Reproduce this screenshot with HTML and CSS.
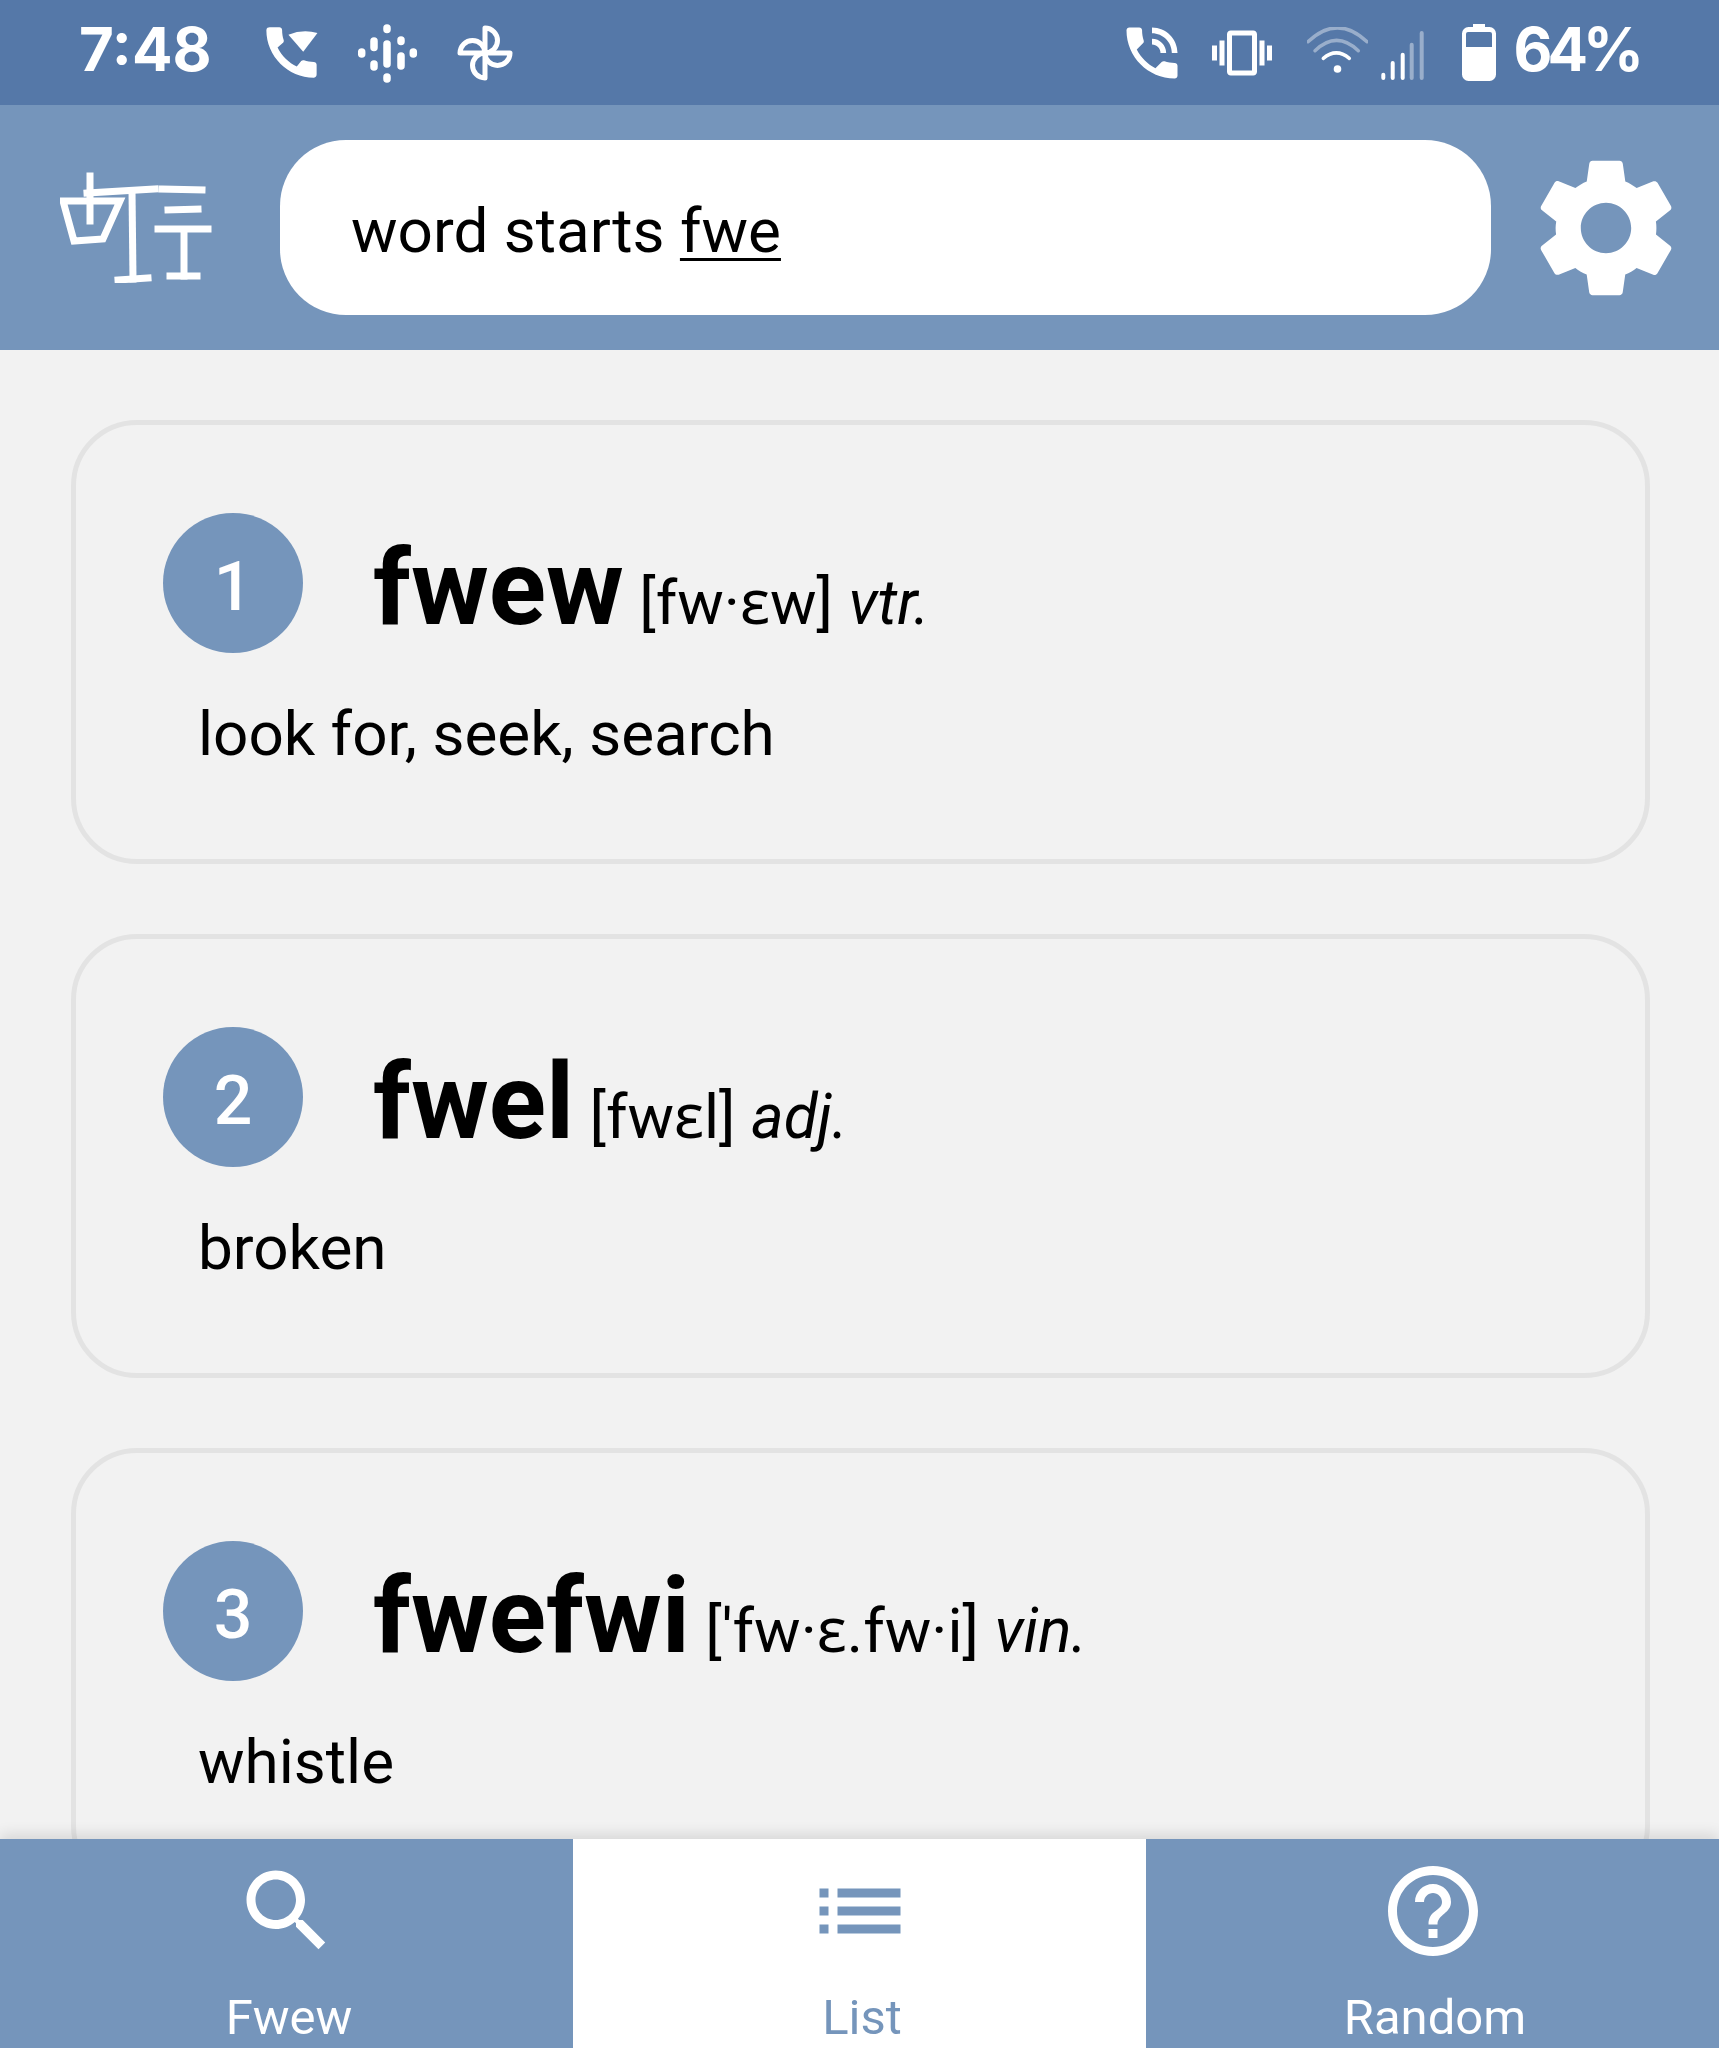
FILE: index.html
```html
<!DOCTYPE html>
<html lang="en">
<head>
<meta charset="utf-8">
<title>Fwew</title>
<link rel="stylesheet" href="styles.css">
</head>
<body>
<div class="app">
  <div class="status">
    <span class="status-text time">7:48</span>
    <svg class="ic-wificall" viewBox="0 0 24 24"><path d="M20.01 15.38c-1.23 0-2.42-.2-3.53-.56-.35-.12-.74-.03-1.01.24l-1.57 1.97c-2.83-1.35-5.48-3.9-6.89-6.83l1.95-1.66c.27-.28.35-.67.24-1.02-.37-1.11-.56-2.3-.56-3.53 0-.54-.45-.99-.99-.99H4.19C3.65 3 3 3.24 3 3.99 3 13.28 10.73 21 20.01 21c.71 0 .99-.63.99-1.18v-3.45c0-.54-.45-.99-.99-.99z"/><path d="M10.9 5.6Q16 3.6 21.3 5L16.2 11.7z"/></svg>
    <svg class="ic-podcast" viewBox="0 0 60 60"><g class="round-bars"><path d="M29 5v1.5M29 21v20M29 54v2M16 18v6.500M16 41v3M43 17v1.500M43 33v10M3.700 29v2M55.300 29v2"/></g></svg>
    <svg class="ic-pinwheel" viewBox="0 0 56 56"><g class="outline"><path d="M28 28H3A12.500 12.500 0 0 1 28 28Z"/><path d="M28 28V3A12.500 12.500 0 0 1 28 28Z"/><path d="M28 28H53A12.500 12.500 0 0 1 28 28Z"/><path d="M28 28V53A12.500 12.500 0 0 1 28 28Z"/></g></svg>
    <div class="status-right">
      <svg class="ic-call" viewBox="0 0 24 24"><path d="M20 15.500c-1.250 0-2.450-.2-3.570-.57-.35-.11-.74-.03-1.020.24l-2.200 2.200c-2.830-1.440-5.150-3.750-6.590-6.590l2.200-2.210c.28-.26.36-.65.25-1C8.700 6.450 8.500 5.250 8.500 4c0-.55-.45-1-1-1H4c-.55 0-1 .45-1 1 0 9.390 7.610 17 17 17 .55 0 1-.45 1-1v-3.500c0-.55-.45-1-1-1zM19 12h2c0-4.970-4.030-9-9-9v2c3.870 0 7 3.130 7 7zm-4 0h2c0-2.760-2.240-5-5-5v2c1.660 0 3 1.340 3 3z"/></svg>
      <svg class="ic-vibrate" viewBox="0 0 24 24"><path d="M0 15h2V9H0v6zm3 2h2V7H3v10zm19-8v6h2V9h-2zm-3 8h2V7h-2v10zM16.500 3h-9C6.670 3 6 3.670 6 4.500v15c0 .83.67 1.500 1.500 1.500h9c.83 0 1.500-.67 1.500-1.500v-15c0-.83-.67-1.500-1.500-1.500zM16 19H8V5h8v14z"/></svg>
      <svg class="ic-wifi" viewBox="0 0 61 46"><circle class="fill" cx="30.500" cy="42" r="3.800"/><path class="arc" d="M16.300 31.300Q29.300 20.500 42.300 31.300"/><path class="arc dim" d="M8 23.700Q29.600 3 51.300 23.700"/><path class="arc dim" d="M1 14.700Q30.500 -13 60 14.700"/></svg>
      <svg class="ic-signal" viewBox="0 0 43 49"><g class="bars"><path d="M2.300 43.700V47M11.700 32V47M21.700 23.700V47"/><path class="dim" d="M30.700 13.700V47M40.700 2V47"/></g></svg>
      <svg class="ic-battery" viewBox="0 0 34 57"><path fill-rule="evenodd" d="M11 0h12v3h4.500a6.500 6.500 0 0 1 6.500 6.500v41a6.500 6.500 0 0 1-6.500 6.500h-21A6.500 6.500 0 0 1 0 50.500v-41A6.500 6.500 0 0 1 6.500 3H11zM6 8a2 2 0 0 0-2 2v13h26V10a2 2 0 0 0-2-2z"/></svg>
      <span class="status-text pct">64%</span>
    </div>
  </div>

  <header class="topbar">
    <svg class="logo" viewBox="0 0 152 112"><g class="logo-strokes"><path d="M30 5V50"/><path d="M27 22L95 18"/><path d="M3 30H60L43 68L14 70Z"/><path d="M72 20L73 108"/><path d="M58 109L88 107"/><path d="M102 18L142 19"/><path d="M108 39L138 38"/><path d="M98 58L148 58"/><path d="M124 60V105"/><path d="M110 105L137 105"/></g></svg>
    <div class="search"><span>word starts <u>fwe</u></span></div>
    <svg class="gear" viewBox="0 0 24 24"><path d="M19.140 12.940c.04-.3.060-.61.060-.94 0-.32-.02-.64-.07-.94l2.030-1.580c.18-.14.230-.41.120-.61l-1.920-3.320c-.12-.22-.37-.29-.59-.22l-2.390.96c-.5-.38-1.030-.7-1.620-.94l-.36-2.540c-.04-.24-.24-.41-.48-.41h-3.840c-.24 0-.43.17-.47.41l-.36 2.540c-.59.24-1.130.57-1.620.94l-2.390-.96c-.22-.08-.47 0-.59.22L2.740 8.870c-.12.21-.08.47.12.61l2.030 1.580c-.05.3-.09.63-.09.94s.02.64.07.94l-2.030 1.580c-.18.14-.23.41-.12.61l1.920 3.320c.12.22.37.29.59.22l2.390-.96c.5.38 1.030.7 1.620.94l.36 2.540c.05.24.24.41.48.41h3.840c.24 0 .44-.17.47-.41l.36-2.540c.59-.24 1.130-.56 1.620-.94l2.390.96c.22.08.47 0 .59-.22l1.920-3.320c.12-.22.07-.47-.12-.61l-2.010-1.580zM12 15.600c-1.980 0-3.600-1.620-3.600-3.600s1.620-3.600 3.600-3.600 3.600 1.620 3.600 3.600-1.620 3.600-3.600 3.600z"/></svg>
  </header>

  <main class="list">
    <article class="card">
      <div class="card-head">
        <div class="num">1</div>
        <div class="title"><b>fwew</b><span class="pron"> [fw·ɛw] <i>vtr.</i></span></div>
      </div>
      <p class="desc">look for, seek, search</p>
    </article>
    <article class="card">
      <div class="card-head">
        <div class="num">2</div>
        <div class="title"><b>fwel</b><span class="pron"> [fwɛl] <i>adj.</i></span></div>
      </div>
      <p class="desc">broken</p>
    </article>
    <article class="card">
      <div class="card-head">
        <div class="num">3</div>
        <div class="title"><b>fwefwi</b><span class="pron"> ['fw·ɛ.fw·i] <i>vin.</i></span></div>
      </div>
      <p class="desc">whistle</p>
    </article>
  </main>

  <nav class="tabs">
    <div class="tab">
      <svg class="tab-icon" viewBox="0 0 24 24"><path d="M15.500 14h-.79l-.28-.27C15.410 12.590 16 11.110 16 9.500 16 5.910 13.090 3 9.500 3S3 5.910 3 9.500 5.910 16 9.500 16c1.610 0 3.090-.59 4.230-1.570l.27.28v.79l5 4.990L20.490 19l-4.990-5zm-6 0C7.010 14 5 11.990 5 9.500S7.010 5 9.500 5 14 7.010 14 9.500 11.990 14 9.500 14z"/></svg>
      <span class="tab-label">Fwew</span>
    </div>
    <div class="tab active">
      <svg class="tab-icon" viewBox="0 0 24 24"><path d="M3 13h2v-2H3v2zm0 4h2v-2H3v2zm0-8h2V7H3v2zm4 4h14v-2H7v2zm0 4h14v-2H7v2zM7 7v2h14V7H7z"/></svg>
      <span class="tab-label">List</span>
    </div>
    <div class="tab">
      <svg class="tab-icon" viewBox="0 0 24 24"><path d="M11 18h2v-2h-2v2zm1-16C6.480 2 2 6.480 2 12s4.480 10 10 10 10-4.480 10-10S17.520 2 12 2zm0 18c-4.410 0-8-3.590-8-8s3.590-8 8-8 8 3.590 8 8-3.590 8-8 8zm0-14c-2.210 0-4 1.790-4 4h2c0-1.100.9-2 2-2s2 .9 2 2c0 2-3 1.750-3 5h2c0-2.250 3-2.500 3-5 0-2.210-1.790-4-4-4z"/></svg>
      <span class="tab-label">Random</span>
    </div>
  </nav>
</div>
</body>
</html>
```

FILE: styles.css
```css
* { box-sizing: border-box; }
html, body { margin: 0; padding: 0; }
body { background: #f2f2f2; font-family: Roboto, "Noto Sans", sans-serif; color: #000; }

.app { width: 1719px; height: 2048px; display: flex; flex-direction: column; overflow: hidden; }

.status { height: 105px; flex: none; background: #5578a8; display: flex; align-items: center; padding: 0 80px 0 79px; fill: #fff; }
.status svg { flex: none; display: block; }
.status-text { font-family: Inter, Roboto, sans-serif; font-weight: 700; font-size: 60px; line-height: 1; color: #fff; margin-top: -7px; }
.time { width: 130px; }
.pct { letter-spacing: -5px; }
.ic-wificall { width: 67px; height: 67px; margin-left: 49px; }
.ic-podcast { width: 60px; height: 60px; margin-left: 33px; }
.ic-pinwheel { width: 56px; height: 56px; margin-left: 39px; }
.round-bars { fill: none; stroke: #fff; stroke-width: 7.500; stroke-linecap: round; }
.outline { fill: none; stroke: #fff; stroke-width: 5; stroke-linejoin: round; }

.status-right { margin-left: auto; display: flex; align-items: center; }
.ic-call { width: 68px; height: 68px; }
.ic-vibrate { width: 60px; height: 60px; margin-left: 26px; }
.ic-wifi { width: 61px; height: 46px; margin: -5px 0 0 35px; }
.ic-signal { width: 43px; height: 49px; margin: 5px 0 0 13px; }
.ic-battery { width: 34px; height: 57px; margin: 0 18px 0 38px; }
.arc { fill: none; stroke: #fff; stroke-width: 3.500; stroke-linecap: round; }
.fill { fill: #fff; }
.bars { fill: none; stroke: #fff; stroke-width: 4; stroke-linecap: round; }
.dim { opacity: .4; }

.topbar { height: 245px; flex: none; background: #7595bb; display: flex; align-items: center; padding-left: 60px; }
.logo { width: 152px; height: 112px; flex: none; display: block; margin-top: -1px; }
.logo-strokes { fill: none; stroke: #fff; stroke-width: 7; stroke-linejoin: miter; stroke-linecap: square; }
.search { width: 1211px; height: 175px; margin-left: 68px; background: #fff; border-radius: 66px; display: flex; align-items: center; padding: 6px 0 0 71px; font-size: 62px; color: #000; }
.search u { text-underline-offset: 6px; text-decoration-thickness: 3px; }
.gear { width: 168px; height: 168px; flex: none; margin-left: 31px; fill: #fff; display: block; }

.list { flex: 1; min-height: 0; overflow: hidden; padding: 70px 69px 0 71px; display: flex; flex-direction: column; gap: 70px; }
.card { height: 444px; flex: none; border: 5px solid #e3e3e3; border-radius: 66px; padding: 88px 0 0 87px; }
.card-head { display: flex; align-items: flex-start; }
.num { width: 140px; height: 140px; flex: none; border-radius: 50%; background: #7595bb; color: #fff; display: flex; align-items: center; justify-content: center; font-size: 68px; font-weight: 500; padding-top: 8px; }
.title { margin-left: 70px; height: 140px; line-height: 140px; font-size: 106px; padding-top: 5px; white-space: nowrap; }
.title b { font-weight: 700; }
.pron { font-size: 62px; font-weight: 400; }
.desc { margin: 46px 0 0 35px; font-size: 62px; line-height: 70px; }

.tabs { height: 209px; flex: none; display: flex; position: relative; box-shadow: 0 -4px 14px rgba(0, 0, 0, .12); }
.tab { flex: 1; background: #7595bb; color: #fff; fill: #fff; display: flex; flex-direction: column; align-items: center; padding-top: 18px; }
.tab.active { background: #fff; color: #7595bb; fill: #7595bb; }
.tab-icon { width: 108px; height: 108px; flex: none; display: block; }
.tab-label { font-size: 49px; line-height: 56px; margin-top: 25px; padding-left: 5px; }
```
